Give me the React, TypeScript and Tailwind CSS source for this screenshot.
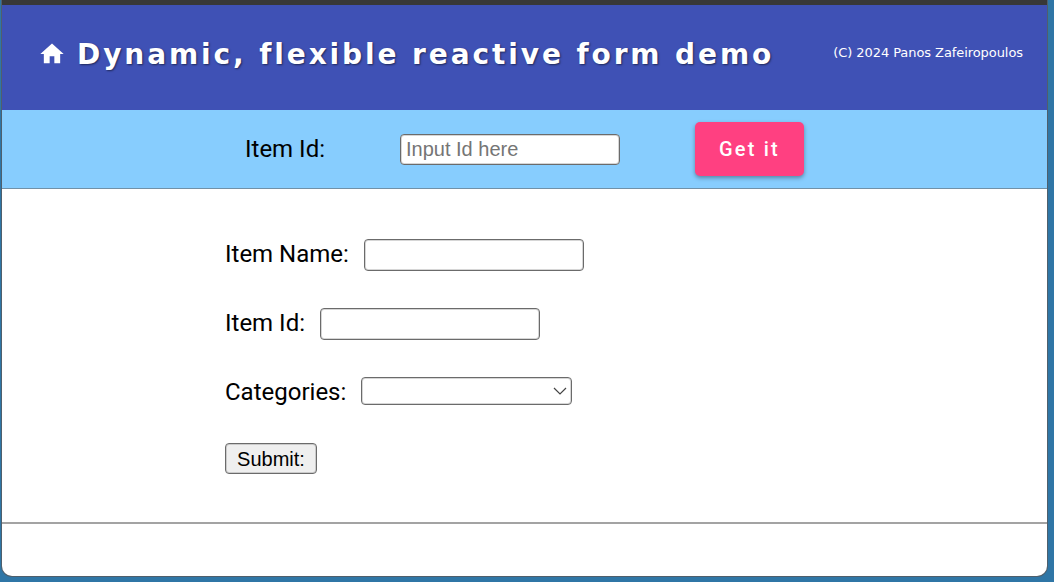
import React from 'react';

const roboto = "font-['Roboto',sans-serif]";
const field = 'bg-white border border-[#6b6b6b] rounded-[4px] shadow-[inset_0_0_0_1px_rgba(118,118,118,0.3)]';

const App: React.FC = () => {
    return (
        <div className="w-[1054px] h-[582px] overflow-hidden bg-[#2f76a6] pl-[2px] pr-[7px]">
            <div className="h-[576px] flex flex-col bg-white rounded-b-[10px] overflow-hidden shadow-[0_0_0_1px_#4f5f6c]">
                {/* Window top edge */}
                <div className="h-[5px] shrink-0 bg-[#383838]" />

                {/* Header */}
                <header className="h-[105px] shrink-0 bg-[#3f51b5] flex items-center pl-[36px] pr-[24px] pb-[7px] text-white">
                    <svg viewBox="0 0 24 24" className="w-[28px] h-[28px] fill-white shrink-0" aria-hidden="true">
                        <path d="M10 20v-6h4v6h5v-8h3L12 3 2 12h3v8z" />
                    </svg>
                    <h1 className="ml-[11px] mt-[1px] text-[28px] leading-none font-bold tracking-[2.9px] whitespace-nowrap font-['DejaVu_Sans',sans-serif] [text-shadow:1px_1px_2px_rgba(0,0,0,0.5)]">
                        Dynamic, flexible reactive form demo
                    </h1>
                    <span className="ml-auto mb-[2px] text-[13px] tracking-[-0.07px] whitespace-nowrap font-['DejaVu_Sans',sans-serif]">
                        (C) 2024 Panos Zafeiropoulos
                    </span>
                </header>

                {/* Lookup bar */}
                <div className={`h-[79px] shrink-0 bg-[#87cdfe] border-b border-[#7191a8] flex items-center pl-[243px] ${roboto}`}>
                    <label className="w-[155px] text-[24px] text-black">Item Id:</label>
                    <input
                        placeholder="Input Id here"
                        className={`w-[220px] h-[31px] px-[5px] text-[20px] placeholder:text-[#757575] font-['Liberation_Sans',sans-serif] ${field}`}
                    />
                    <button className="ml-[75px] w-[109px] h-[54px] rounded-[5px] bg-[#ff4081] text-white text-[20px] font-medium tracking-[2.2px] shadow-[0_2px_4px_rgba(0,0,0,0.35)]">
                        Get it
                    </button>
                </div>

                {/* Item form */}
                <form className={`flex-1 flex flex-col items-start pl-[223px] pt-[50px] ${roboto}`}>
                    <div className="h-[32px] flex items-center">
                        <label className="text-[24px] leading-[30px] mb-[2px] text-black">Item Name:</label>
                        <input className={`ml-[15px] w-[220px] h-[32px] ${field}`} />
                    </div>
                    <div className="mt-[37px] h-[32px] flex items-center">
                        <label className="text-[24px] leading-[30px] mb-[2px] text-black">Item Id:</label>
                        <input className={`ml-[15px] w-[220px] h-[32px] ${field}`} />
                    </div>
                    <div className="mt-[37px] h-[28px] flex items-center">
                        <label className="text-[24px] leading-[30px] mt-[1px] text-black">Categories:</label>
                        <div className={`ml-[15px] w-[211px] h-[28px] flex items-center justify-end pr-[4px] ${field}`}>
                            <svg viewBox="0 0 14 8" className="w-[14px] h-[8px] fill-none stroke-[#444] stroke-[1.2]" aria-hidden="true">
                                <path d="M1 1l6 6 6-6" />
                            </svg>
                        </div>
                    </div>
                    <button
                        type="button"
                        className={`mt-[38px] w-[92px] h-[31px] pb-[2px] text-[20px] text-black font-['Liberation_Sans',sans-serif] ${field} !bg-[#efefef]`}
                    >
                        Submit:
                    </button>
                    <div className="mt-[48px] -ml-[223px] w-[1045px] h-[2px] bg-[#a3a3a3]" />
                </form>
            </div>
        </div>
    );
};

export default App;
